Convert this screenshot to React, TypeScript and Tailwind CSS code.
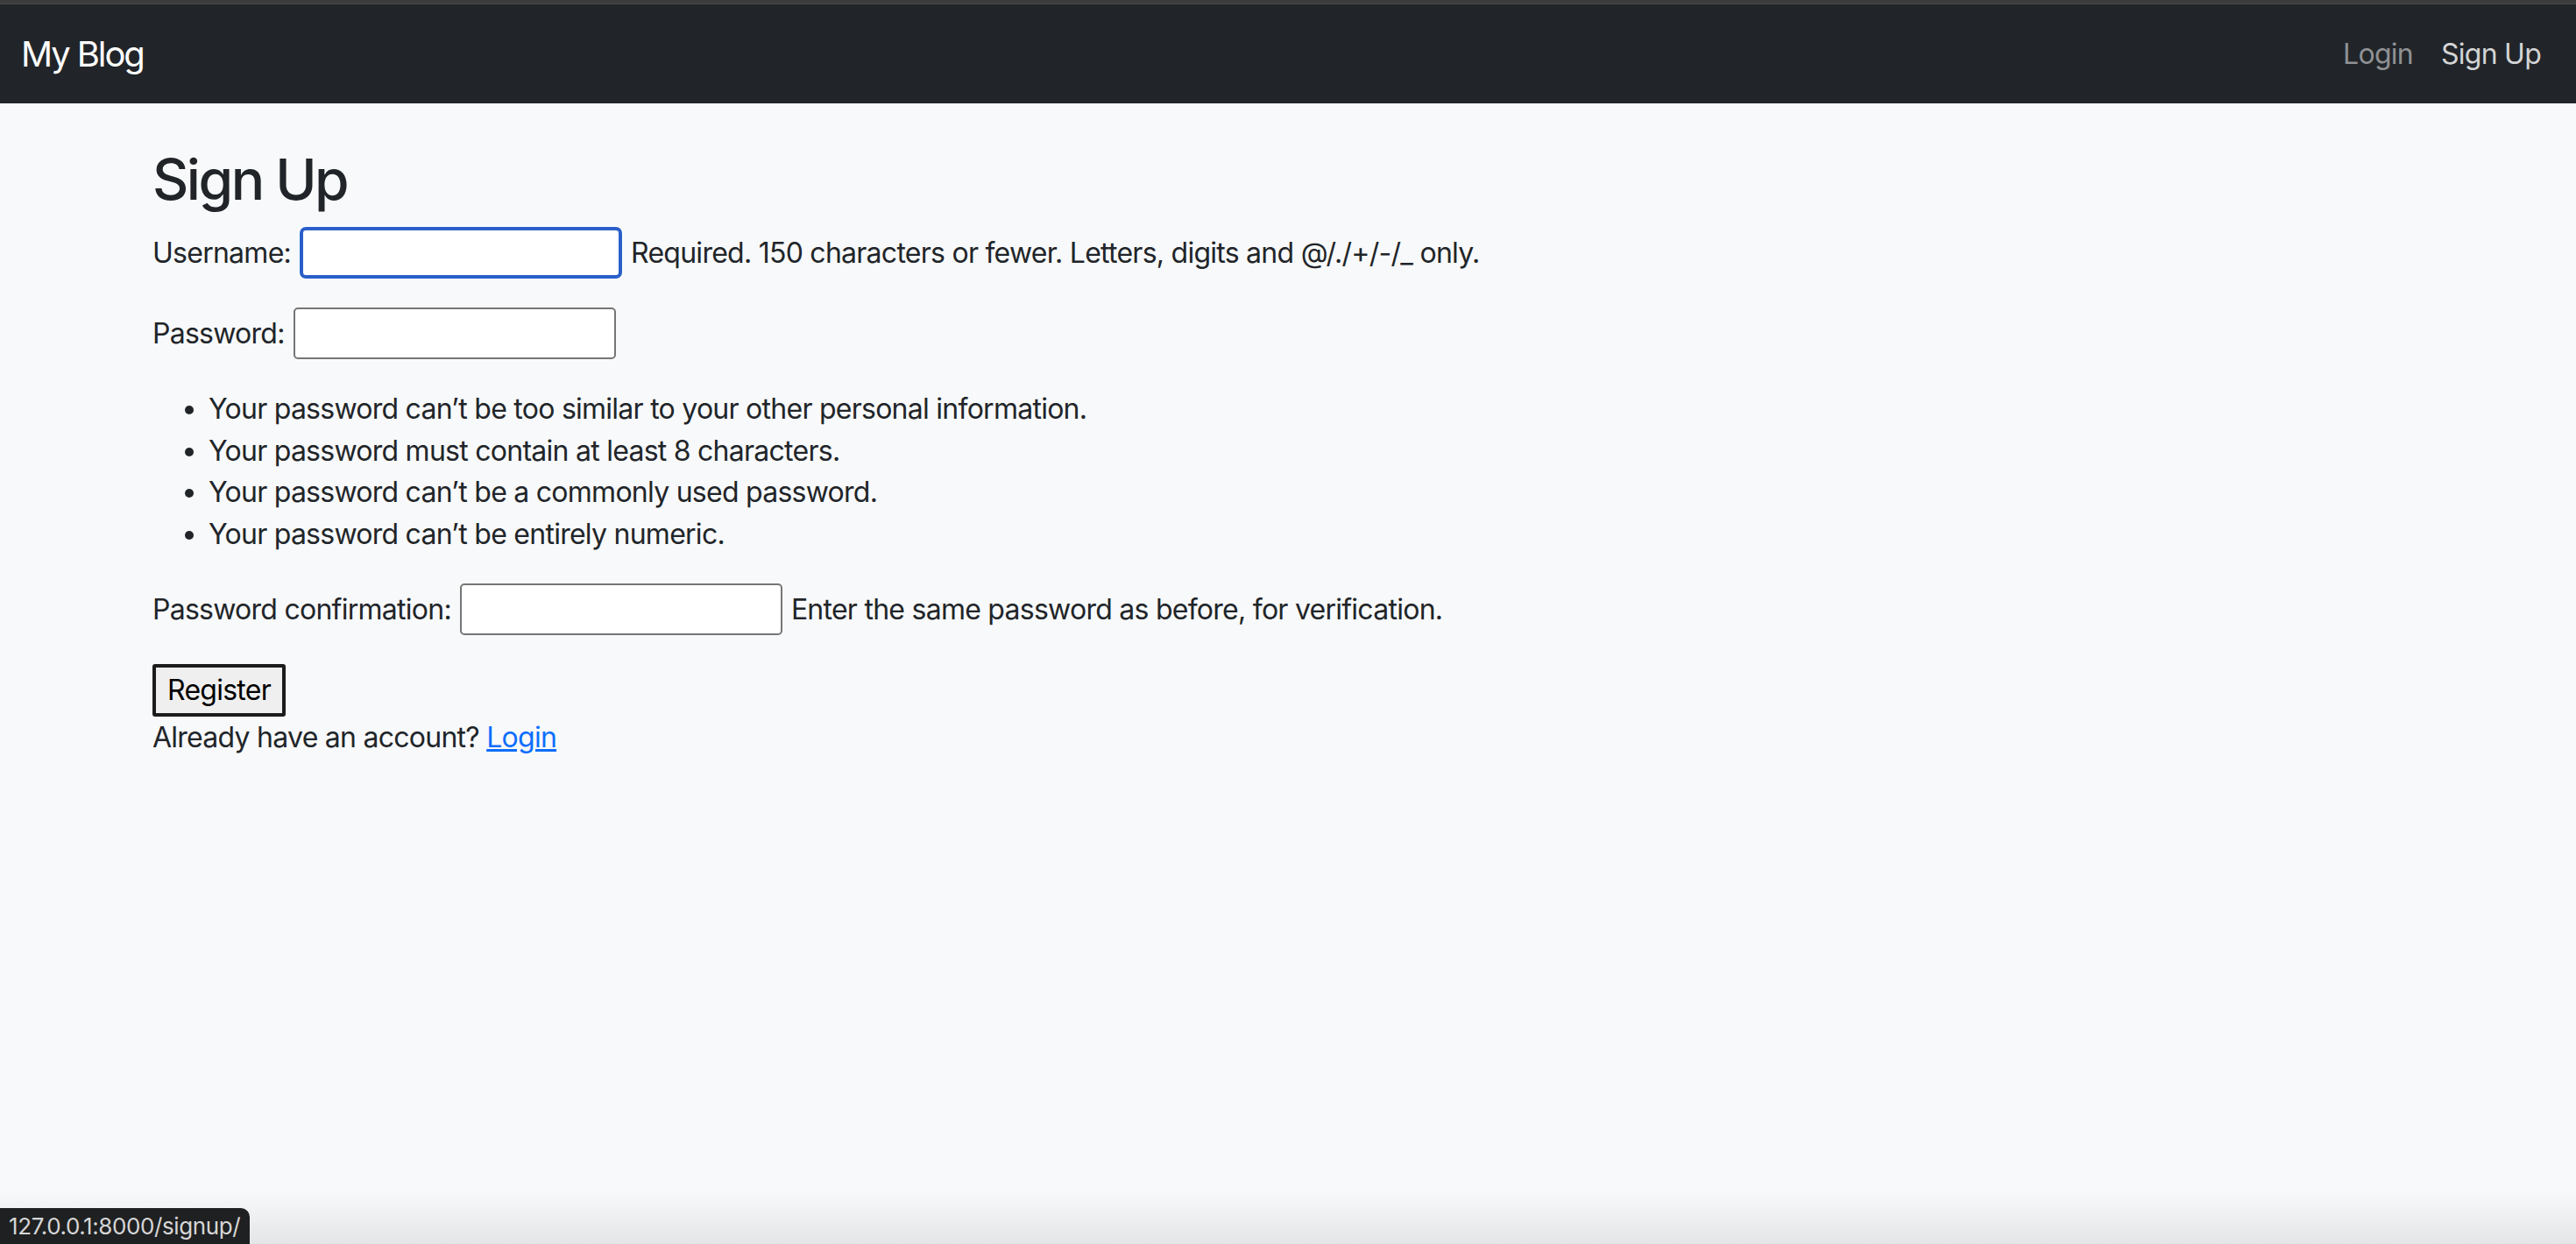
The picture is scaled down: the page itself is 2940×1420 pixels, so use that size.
import React from 'react';

const RULES = [
  "Your password can’t be too similar to your other personal information.",
  "Your password must contain at least 8 characters.",
  "Your password can’t be a commonly used password.",
  "Your password can’t be entirely numeric.",
];

const Field: React.FC<{ label: string; help?: string; focused?: boolean }> = ({ label, help, focused }) => (
  <div className="flex items-center gap-[10px]">
    <label className="leading-[48px]">{label}</label>
    <input
      type="text"
      className={`w-[368px] h-[59px] bg-white outline-none ${
        focused
          ? 'border-[4px] border-[#2b5fc9] rounded-[7px] ring-1 ring-white'
          : 'border-2 border-[#767676] rounded-[5px]'
      }`}
    />
    {help && <span className="leading-[48px]">{help}</span>}
  </div>
);

export default function App() {
  return (
    <div className="relative min-h-[1420px] bg-[#f8f9fa] text-[#212529] text-[32px] tracking-[-0.74px] overflow-hidden [font-family:Inter,'Liberation_Sans',sans-serif]">
      <div className="h-[5px] bg-[#3c3c3c] border-b border-[#4a4a4a]" />
      <nav className="h-[113px] bg-[#212529] flex items-center justify-between pl-[24px] pr-[24px]">
        <span className="text-[40px] tracking-[-2.1px] text-white">My Blog</span>
        <div className="flex items-center">
          <a className="px-[16px] text-[#8f9194]">Login</a>
          <a className="px-[16px] text-[#d3d4d5]">Sign Up</a>
        </div>
      </nav>

      <main className="pl-[174px] pt-[48px]">
        <h2 className="text-[64px] font-medium tracking-[-2.5px] leading-[77px] mb-[16px]">Sign Up</h2>
        <form>
          <div className="mb-[33px]">
            <Field label="Username:" focused help="Required. 150 characters or fewer. Letters, digits and @/./+/-/_ only." />
          </div>
          <div className="mb-[33px]">
            <Field label="Password:" />
          </div>
          <ul className="list-disc pl-[64px] leading-[47.5px] mb-[33px]">
            {RULES.map((r) => (
              <li key={r}>{r}</li>
            ))}
          </ul>
          <div className="mb-[33px]">
            <Field label="Password confirmation:" help="Enter the same password as before, for verification." />
          </div>
          <button
            type="button"
            className="h-[60px] w-[152px] bg-[#efefef] border-[4px] border-[#1c1c1c] rounded-[3px] text-black leading-none"
          >
            Register
          </button>
        </form>
        <p className="leading-[48px]">
          Already have an account? <a className="text-[#0d6efd] underline">Login</a>
        </p>
      </main>

      <div className="absolute bottom-0 left-0 right-0 h-[60px] bg-gradient-to-b from-transparent to-[#e4e5e7]" />
      <div className="absolute bottom-0 left-0 h-[41px] w-[285px] bg-[#1f2021] rounded-tr-[10px] flex items-center pl-[10px] text-[26px] tracking-[-0.4px] text-[#d6d6d6]">
        127.0.0.1:8000/signup/
      </div>
    </div>
  );
}
